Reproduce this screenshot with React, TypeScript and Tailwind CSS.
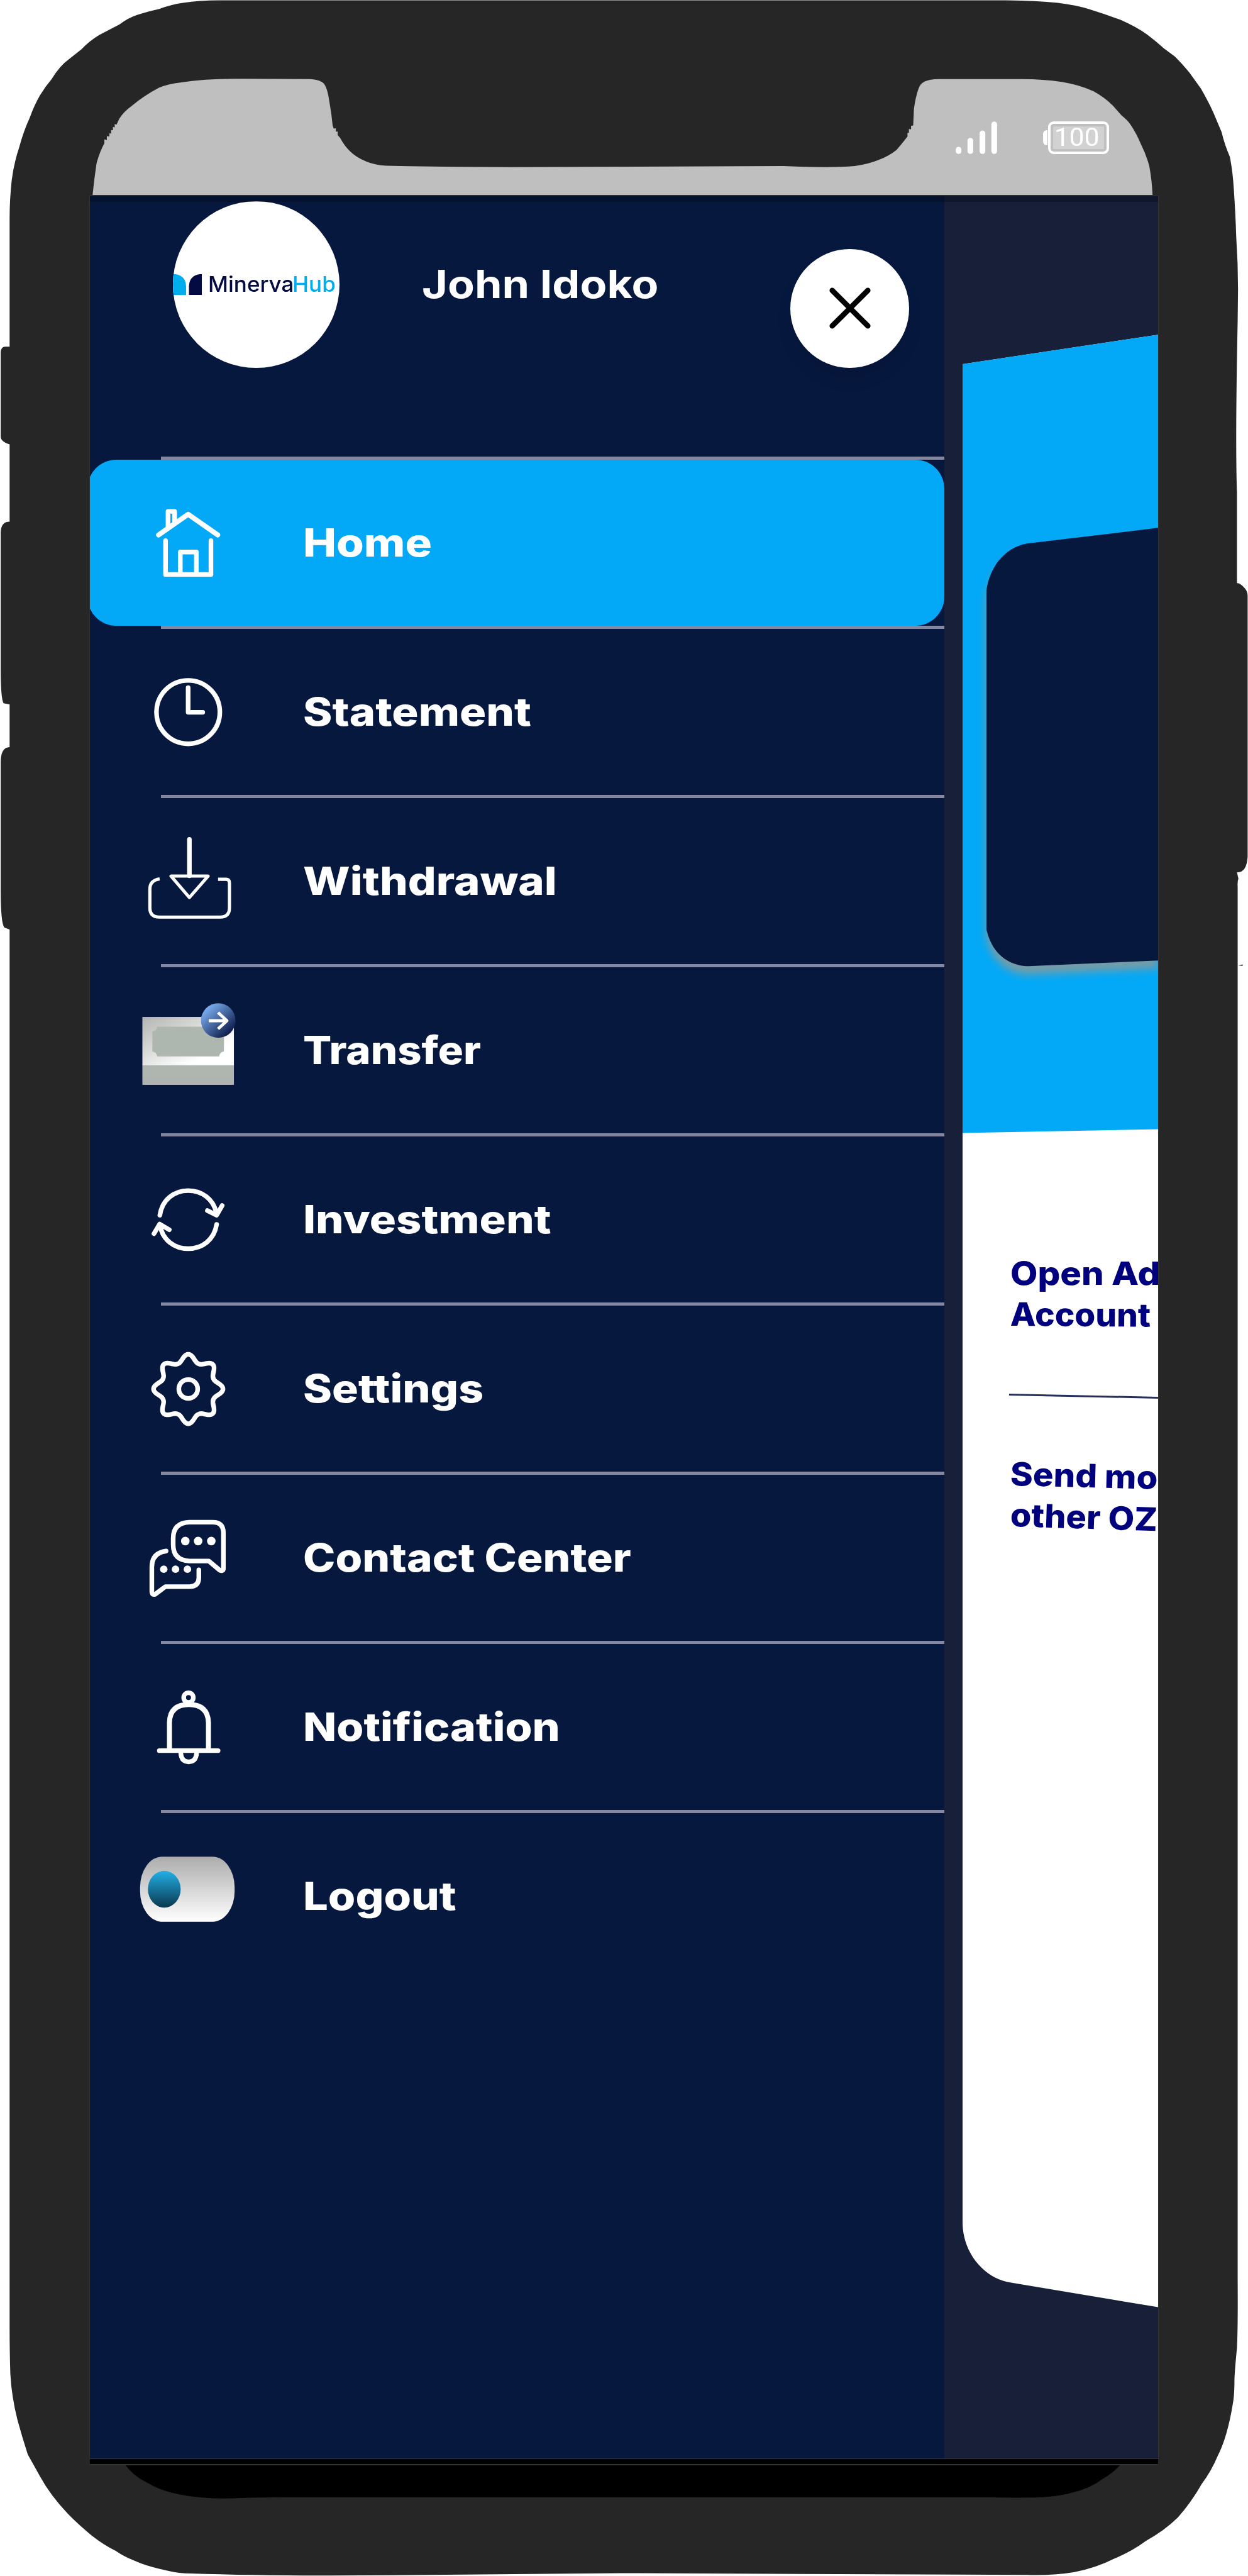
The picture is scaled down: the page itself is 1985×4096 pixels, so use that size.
import { useLayoutEffect, useRef, useState, type ReactNode } from "react";

/** Single line of text stretched horizontally to an exact width. */
function FitText({ children, width, className = "" }: { children: string; width: number; className?: string }) {
  const ref = useRef<HTMLSpanElement>(null);
  const [scale, setScale] = useState(1);
  useLayoutEffect(() => {
    if (ref.current) setScale(width / ref.current.offsetWidth);
  }, [width, children]);
  return (
    <span
      ref={ref}
      className={`block w-max origin-left whitespace-nowrap ${className}`}
      style={{ transform: `scaleX(${scale})` }}
    >
      {children}
    </span>
  );
}

function DeviceFrame() {
  return (
    <svg className="absolute inset-0 h-full w-full" viewBox="0 0 3504 7230" preserveAspectRatio="none">
      <path
        fill="#262626"
        d="M27 612 Q27 560 33 505 Q39 458 54 413 Q66 368 84 329 Q96 296 112 268 Q128 242 145 222 Q168 184 195 165 L229 138 Q252 114 279 98 L335 69 Q360 50 385 42 Q418 31 447 25 Q480 13 514 8 Q560 1 614 1 H2825 Q2910 2 2970 8 Q3020 14 3059 26 Q3105 40 3149 57 Q3190 75 3221 97 Q3245 115 3268 136 L3299 159 Q3320 180 3339 203 L3372 249 Q3392 284 3406 314 L3430 371 Q3438 405 3453 440 Q3461 480 3464 528 Q3469 600 3471 666 Q3476 740 3476 811 L3475 900 Q3468 1244 3473 1382 V1637 Q3480 1634 3494 1650 Q3503 1660 3503 1672 V2405 Q3500 2450 3473 2448 L3477 2466 Q3474 2475 3475 2488 V6400 Q3476 6530 3473 6590 Q3467 6650 3466 6677 Q3466 6725 3461 6749 Q3446 6840 3419 6893 Q3401 6936 3374 6972 Q3345 7023 3307 7066 Q3268 7104 3218 7131 Q3179 7160 3129 7181 Q3078 7207 3017 7219 Q2960 7229 2883 7227 L1743 7222 L1100 7228 Q780 7231 536 7223 Q500 7222 480 7217 Q415 7204 380 7188 Q348 7176 324 7159 Q290 7142 257 7116 Q220 7086 190 7055 Q140 7002 112 6950 L78 6889 Q62 6840 49 6792 Q32 6724 29 6662 Q27 6600 27 6532 V2609 L12 2603 Q2 2590 2 2500 V2140 Q2 2097 27 2097 V1977 L10 1974 Q2 1960 2 1880 V1495 Q2 1464 27 1464 V1247 Q2 1240 2 1225 V990 Q2 973 15 973 H27 Z"
      />
      <path fill="#262626" d="M3477 2710 L3489 2707 V2711 Z" />
      <path
        fill="#bfbfbf"
        d="M260 547 Q264 505 271 459 Q279 428 293 402 V391 L300 393 V382 L307 383 V374 L312 375 V365 L317 366 V356 L322 358 V348 L327 350 L335 333 Q348 313 369 298 Q405 268 447 246 Q470 236 503 232 Q580 220 670 221 L871 222 Q903 224 911 237 Q920 250 925 287 Q931 320 934 352 L937 361 L943 360 V370 L948 369 V379 L955 387 Q966 408 983 425 Q1002 443 1028 453 Q1052 463 1084 465 Q1250 469 1450 469 L2199 466 Q2260 469 2322 469 Q2365 469 2400 466 Q2438 461 2467 449 Q2496 438 2517 421 Q2531 405 2548 383 V372 L2552 373 V362 L2558 363 V353 L2564 352 L2566 306 Q2571 270 2579 249 Q2586 222 2635 222 H2869 Q2930 222 2981 230 Q3030 238 3070 256 Q3103 274 3126 298 L3149 324 Q3165 337 3173 348 Q3191 374 3204 406 Q3219 436 3227 467 Q3234 505 3236 547 Z"
      />
      <path
        fill="#000"
        d="M351 6917 Q375 6950 413 6968 Q450 6991 503 7001 Q565 7014 648 7012 Q730 7009 804 7009 H2771 Q2830 7011 2883 7010 Q2960 7010 3006 6997 Q3060 6985 3095 6958 Q3127 6940 3146 6917 Z"
      />
    </svg>
  );
}

function RowIcon({ children }: { children: ReactNode }) {
  return (
    <svg
      className="h-[264px] w-[158.6px] shrink-0 overflow-visible"
      viewBox="0 0 280 466"
      fill="none"
      stroke="#fff"
      strokeWidth="13"
      strokeLinecap="round"
      strokeLinejoin="round"
    >
      {children}
    </svg>
  );
}

const HomeIcon = () => (
  <RowIcon>
    <path d="M64 211 147 153 230 211" strokeWidth="14" />
    <path d="M90.5 188 V145 H109 V176" />
    <path d="M83.5 227 V322 H211 V227" />
    <path d="M125 322 V259 H170 V322" />
  </RowIcon>
);

const ClockIcon = () => (
  <RowIcon>
    <circle cx="147" cy="233.5" r="89" />
    <path d="M147 165 V234 H188" />
  </RowIcon>
);

const WithdrawIcon = () => (
  <RowIcon>
    <path d="M150.5 116 V218" />
    <path d="M99 219 H203 L150.5 279 Z" strokeWidth="9" />
    <path
      d="M67 227 Q39.5 231 39.5 256 V308 Q39.5 334 66 334 H237 Q263 334 263 308 V238 Q263 228 253 228 H231"
      strokeWidth="9"
      strokeLinecap="butt"
    />
  </RowIcon>
);

const TransferIcon = () => (
  <RowIcon>
    <defs>
      <linearGradient id="note" x1="0" y1="0" x2="1" y2="1">
        <stop offset="0" stopColor="#b2b5b1" />
        <stop offset="0.75" stopColor="#ffffff" />
      </linearGradient>
      <linearGradient id="noteBase" x1="0" y1="0" x2="0" y2="1">
        <stop offset="0" stopColor="#adb7af" />
        <stop offset="1" stopColor="#b1b3b2" />
      </linearGradient>
      <linearGradient id="orb" x1="0.1" y1="0.1" x2="0.85" y2="0.9">
        <stop offset="0" stopColor="#82b8fb" />
        <stop offset="1" stopColor="#0a1745" />
      </linearGradient>
    </defs>
    <g stroke="none">
      <rect x="18.5" y="139.5" width="257" height="136" fill="url(#note)" />
      <rect x="18.5" y="275" width="257" height="55" fill="url(#noteBase)" />
      <path d="M60 167 H234 Q236 179 247.500 180 V236 Q236 238 234 250 H60 Q58 238 46.500 236 V180 Q58 179 60 167 Z" fill="#adb7af" />
      <circle cx="231.500" cy="149.500" r="48.500" fill="url(#orb)" />
    </g>
    <path d="M205 150 H256 M231 127 L256 150 L231 173" strokeWidth="8.5" strokeLinecap="butt" />
  </RowIcon>
);

const CycleIcon = () => (
  <RowIcon>
    <path d="M67.500 221 C74 178 107 152 147 152 C186 152 218 176 226 214" />
    <path d="M201 208 L227 221 L242.500 194" />
    <path d="M227 247 C220 290 187 315 147 315 C108 315 75 290 68 250" />
    <path d="M51 273 L67 246 L94 262" />
  </RowIcon>
);

const gearOutline =
  Array.from({ length: 240 }, (_, i) => {
    const t = (i / 240) * Math.PI * 2;
    const r = 76.5 + 21 * Math.pow((1 + Math.cos(8 * t)) / 2, 1.25);
    return `${i ? "L" : "M"}${(147.3 + r * Math.sin(t)).toFixed(1)} ${(234 - r * Math.cos(t)).toFixed(1)}`;
  }).join(" ") + " Z";

const GearIcon = () => (
  <RowIcon>
    <path d={gearOutline} />
    <circle cx="147.300" cy="234" r="26.500" />
  </RowIcon>
);

const ChatIcon = () => (
  <RowIcon>
    <path d="M150 133 H216 Q246 133 246 163 V262 Q246 272 236 268 L205 242 H150 Q105 240 105 197 V178 Q105 135 150 133 Z" />
    <path d="M85 214 Q45 219 45 259 V328 Q46 339 55 335 L83 314 H152 Q177 313 177 289 V267" />
    <g fill="#fff" stroke="none">
      <circle cx="139" cy="186" r="12" />
      <circle cx="175" cy="186" r="12" />
      <circle cx="212" cy="186" r="12" />
      <circle cx="78.500" cy="265" r="10.500" />
      <circle cx="111.500" cy="265" r="10.500" />
      <circle cx="145" cy="265" r="10.500" />
    </g>
  </RowIcon>
);

const BellIcon = () => (
  <RowIcon>
    <circle cx="148" cy="150.500" r="13.500" />
    <path d="M94.500 298 V220 Q96 170 149 170 Q202 170 204 220 V298" strokeWidth="14" />
    <path d="M66 299.500 H231" />
    <path d="M126 301 Q126 331 148.500 331 Q171 331 171 301" />
  </RowIcon>
);

const ToggleIcon = () => (
  <RowIcon>
    <defs>
      <linearGradient id="track" x1="0" y1="0" x2="0" y2="1">
        <stop offset="0" stopColor="#acacac" />
        <stop offset="1" stopColor="#ffffff" />
      </linearGradient>
      <linearGradient id="knob" x1="0" y1="0" x2="0" y2="1">
        <stop offset="0" stopColor="#22b0e6" />
        <stop offset="1" stopColor="#0b384e" />
      </linearGradient>
    </defs>
    <g stroke="none">
      <rect x="12" y="122" width="265.500" height="183" rx="62" ry="86" fill="url(#track)" />
      <ellipse cx="80" cy="213.500" rx="46" ry="51.500" fill="url(#knob)" />
    </g>
  </RowIcon>
);

const items = [
  { label: "Home", width: 205, Icon: HomeIcon, active: true },
  { label: "Statement", width: 363, Icon: ClockIcon },
  { label: "Withdrawal", width: 404, Icon: WithdrawIcon },
  { label: "Transfer", width: 283, Icon: TransferIcon },
  { label: "Investment", width: 394, Icon: CycleIcon },
  { label: "Settings", width: 287, Icon: GearIcon },
  { label: "Contact Center", width: 522, Icon: ChatIcon },
  { label: "Notification", width: 409, Icon: BellIcon },
  { label: "Logout", width: 244, Icon: ToggleIcon },
];

function StatusBar() {
  return (
    <header className="flex h-[311.600px] items-start justify-end pt-[192px] pr-[221px]">
      <svg className="mr-[72px] h-[54px] w-[68px]" viewBox="0 0 120 95" fill="#fff">
        <rect x="2" y="73" width="16" height="20" rx="8" />
        <rect x="35" y="48" width="16" height="45" rx="8" />
        <rect x="69" y="27" width="16" height="66" rx="8" />
        <rect x="102" y="2" width="16" height="91" rx="8" />
      </svg>
      <div className="flex items-center pt-[1px]">
        <div className="mr-[1px] h-[24px] w-[7px] rounded-l-md bg-white" />
        <div className="h-[52px] w-[97px] rounded-[9px] border-[4.500px] border-white p-[4px]">
          <div className="flex h-full w-full items-center bg-[#d2d2d2] pl-[1.500px] font-['Roboto',sans-serif] text-[40px] leading-none text-white">
            <FitText width={71}>100</FitText>
          </div>
        </div>
      </div>
    </header>
  );
}

function Profile() {
  return (
    <div className="flex h-[414px] items-start pl-[132px] pt-[8.500px]">
      <div className="flex h-[265px] w-[265px] shrink-0 items-center overflow-hidden rounded-full bg-white">
        <svg className="h-[33px] w-[46px] shrink-0" viewBox="0 0 81 58">
          <path fill="#00aeef" d="M0 0 H7 Q37 4 37 36 V58 H0 Z" />
          <path fill="#040b42" d="M81 0 V58 H45 V34 Q46 4 75 0 Z" />
        </svg>
        <div className="ml-[10px] flex font-['Inter',sans-serif] text-[33.500px] font-medium leading-none">
          <div className="w-[134px] shrink-0 text-[#040b42]">
            <FitText width={136}>Minerva</FitText>
          </div>
          <div className="w-[69px] shrink-0 text-[#00aeef]">
            <FitText width={69}>Hub</FitText>
          </div>
        </div>
      </div>
      <h1 className="ml-[131px] flex h-[263px] w-[586px] shrink-0 items-center font-['Inter',sans-serif] text-[61.500px] font-bold leading-none text-white">
        <FitText width={377}>John Idoko</FitText>
      </h1>
      <button className="mt-[75.500px] flex h-[189px] w-[189px] shrink-0 items-center justify-center rounded-full bg-white shadow-[0_18px_24px_rgba(0,0,0,0.09)]">
        <svg className="h-[68px] w-[68px]" viewBox="0 0 120 120" stroke="#000" strokeWidth="15" strokeLinecap="round">
          <path d="M10 10 110 110 M110 10 10 110" />
        </svg>
      </button>
    </div>
  );
}

function SideMenu() {
  return (
    <nav className="w-[1359px] shrink-0 bg-[#07183f]">
      <Profile />
      <ul>
        {items.map(({ label, width, Icon, active }) => (
          <li key={label} className="flex h-[269.070px] flex-col">
            <div className="ml-[113px] h-[5px] shrink-0 bg-[#84879f]" />
            <div
              className={
                active
                  ? "-ml-[4px] flex h-[264px] items-center rounded-[46px] bg-[#03a9f7] pl-[76.500px]"
                  : "flex h-[264px] items-center pl-[72.500px]"
              }
            >
              <Icon />
              <div className="ml-[108px] font-['Inter',sans-serif] text-[61.500px] font-extrabold leading-none text-white">
                <FitText width={width}>{label}</FitText>
              </div>
            </div>
          </li>
        ))}
      </ul>
    </nav>
  );
}

/** Page behind the menu, tilted away from the viewer. */
function TiltedPage() {
  return (
    <main className="flex-1 overflow-hidden bg-[#171f39] pl-[29px]">
      <div className="h-[3360px] bg-white pt-[220px] [clip-path:path('M0_267.500_L311_220.600_V3357_L77_3318_C36_3312_0_3272_0_3222_Z')]">
        <section className="h-[1270px] bg-[#03a9f7] pl-[37.500px] pt-[288.700px] [clip-path:polygon(0_0,100%_0,100%_1264px,0_1270px)]">
          <div className="drop-shadow-[0_13px_7px_rgba(170,150,130,0.7)]">
            <div className="h-[720px] bg-[#07183f] [clip-path:path('M0_123_C3_88_25_51_65_44_L274_19_V707_L68_716_C40_716_9_700_0_655_Z')]" />
          </div>
        </section>
        <section className="pl-[76px] pt-[190.500px] font-['Inter',sans-serif] text-[51.500px] font-extrabold leading-[65px] text-[#00007f]">
          <div>
            <FitText width={274}>Open Add</FitText>
            <div className="origin-left rotate-[0.4deg]">
              <FitText width={223}>Account</FitText>
            </div>
          </div>
          <div className="-ml-[2px] mt-[94px] h-[2.500px] origin-left rotate-[1.200deg] bg-[#26305b]" />
          <div className="mt-[92px]">
            <div className="origin-left rotate-[1.400deg]">
              <FitText width={234}>Send mo</FitText>
            </div>
            <div className="origin-left rotate-[1.800deg]">
              <FitText width={234}>other OZ</FitText>
            </div>
          </div>
        </section>
      </div>
    </main>
  );
}

export default function App() {
  return (
    <div className="relative h-[4096px] w-[1985px] overflow-hidden bg-white">
      <DeviceFrame />
      <div className="relative flex h-full flex-col">
        <StatusBar />
        <div className="relative ml-[143px] flex h-[3597px] w-[1699px] overflow-hidden outline-1 outline-[#333333]">
          <SideMenu />
          <TiltedPage />
          <div className="absolute inset-x-0 top-0 h-[9px] bg-black/25" />
        </div>
        <div className="ml-[143px] h-[9px] w-[1699px] bg-black" />
        <div className="ml-[143px] h-[2px] w-[1699px] bg-[#333333]" />
      </div>
    </div>
  );
}
